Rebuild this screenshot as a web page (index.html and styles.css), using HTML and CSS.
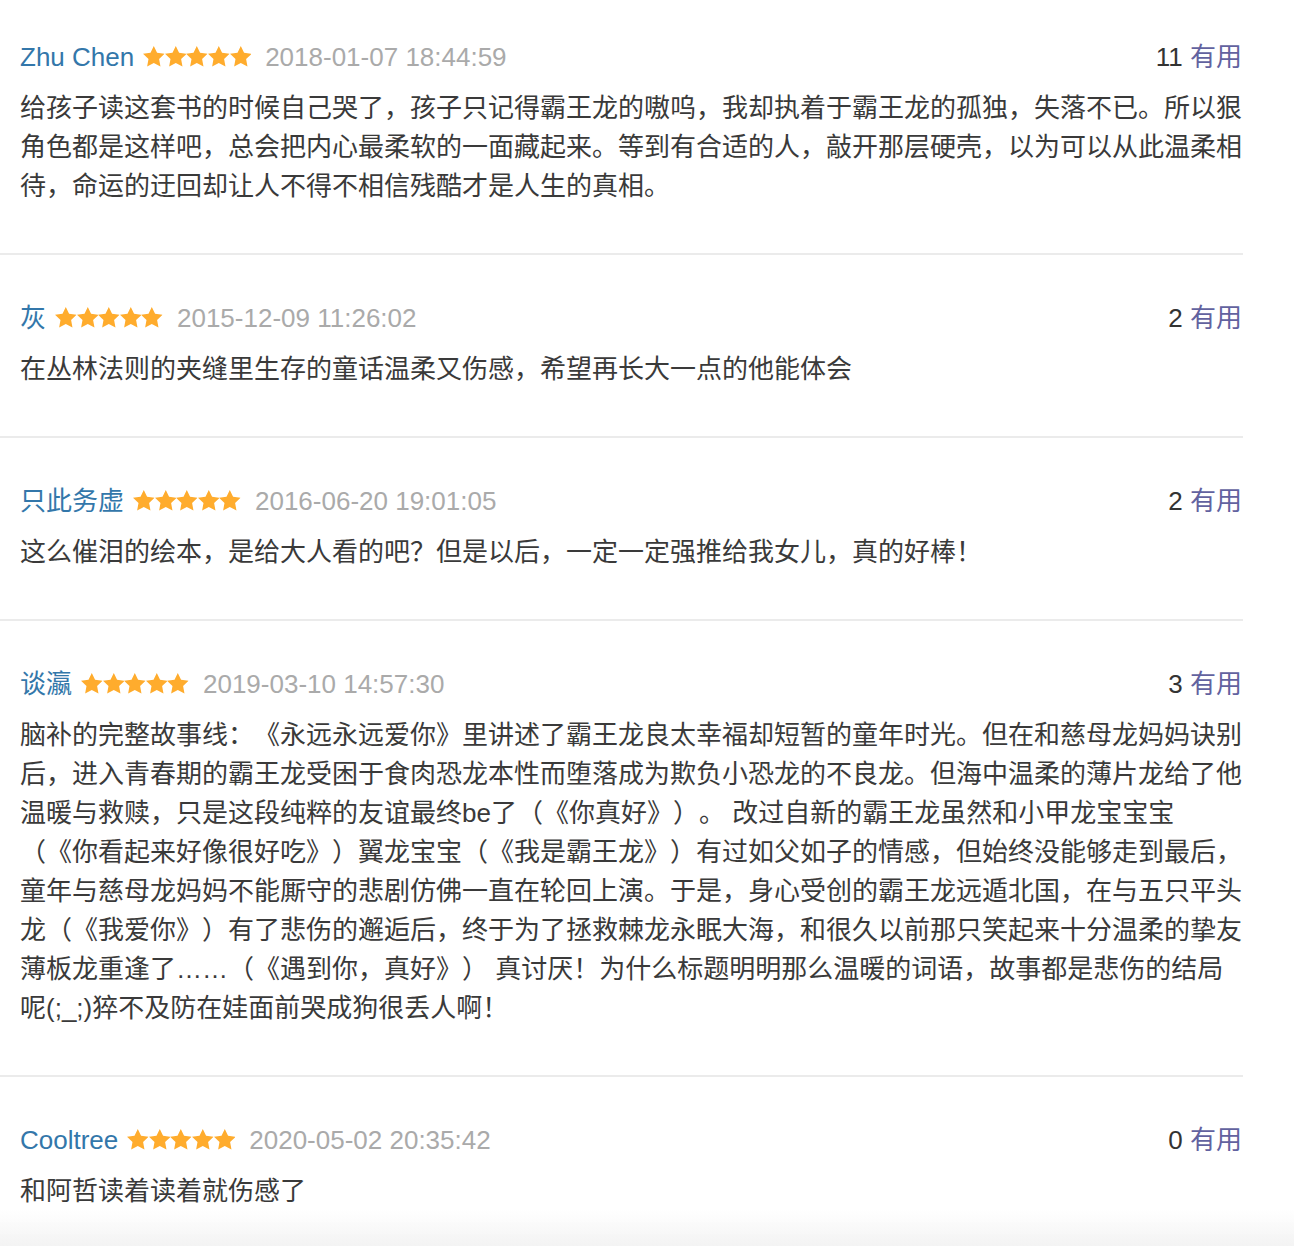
FILE: index.html
```html
<!DOCTYPE html>
<html lang="zh-CN">
<head>
<meta charset="utf-8">
<title>短评</title>
<link rel="stylesheet" href="styles.css">
</head>
<body>
<svg class="defs" width="0" height="0" aria-hidden="true">
  <defs>
    <symbol id="star" viewBox="0 0 24 24">
      <polygon points="12,0 15.64,7.58 23.98,8.71 17.9,14.52 19.41,22.79 12,18.8 4.59,22.79 6.1,14.52 0.02,8.71 8.36,7.58"/>
    </symbol>
  </defs>
</svg>
<div class="list">
  <div class="review">
    <div class="meta">
      <div class="who">
        <a class="name">Zhu Chen</a>
        <span class="stars"><svg><use href="#star"/></svg><svg><use href="#star"/></svg><svg><use href="#star"/></svg><svg><use href="#star"/></svg><svg><use href="#star"/></svg></span>
        <span class="date">2018-01-07 18:44:59</span>
      </div>
      <div class="vote"><span class="count">11</span> <a class="useful">有用</a></div>
    </div>
    <p class="text">给孩子读这套书的时候自己哭了，孩子只记得霸王龙的嗷呜，我却执着于霸王龙的孤独，失落不已。所以狠角色都是这样吧，总会把内心最柔软的一面藏起来。等到有合适的人，敲开那层硬壳，以为可以从此温柔相待，命运的迂回却让人不得不相信残酷才是人生的真相。</p>
  </div>
  <div class="review">
    <div class="meta">
      <div class="who">
        <a class="name">灰</a>
        <span class="stars"><svg><use href="#star"/></svg><svg><use href="#star"/></svg><svg><use href="#star"/></svg><svg><use href="#star"/></svg><svg><use href="#star"/></svg></span>
        <span class="date">2015-12-09 11:26:02</span>
      </div>
      <div class="vote"><span class="count">2</span> <a class="useful">有用</a></div>
    </div>
    <p class="text">在丛林法则的夹缝里生存的童话温柔又伤感，希望再长大一点的他能体会</p>
  </div>
  <div class="review">
    <div class="meta">
      <div class="who">
        <a class="name">只此务虚</a>
        <span class="stars"><svg><use href="#star"/></svg><svg><use href="#star"/></svg><svg><use href="#star"/></svg><svg><use href="#star"/></svg><svg><use href="#star"/></svg></span>
        <span class="date">2016-06-20 19:01:05</span>
      </div>
      <div class="vote"><span class="count">2</span> <a class="useful">有用</a></div>
    </div>
    <p class="text">这么催泪的绘本，是给大人看的吧？但是以后，一定一定强推给我女儿，真的好棒！</p>
  </div>
  <div class="review">
    <div class="meta">
      <div class="who">
        <a class="name">谈瀛</a>
        <span class="stars"><svg><use href="#star"/></svg><svg><use href="#star"/></svg><svg><use href="#star"/></svg><svg><use href="#star"/></svg><svg><use href="#star"/></svg></span>
        <span class="date">2019-03-10 14:57:30</span>
      </div>
      <div class="vote"><span class="count">3</span> <a class="useful">有用</a></div>
    </div>
    <p class="text">脑补的完整故事线：《永远永远爱你》里讲述了霸王龙良太幸福却短暂的童年时光。但在和慈母龙妈妈诀别后，进入青春期的霸王龙受困于食肉恐龙本性而堕落成为欺负小恐龙的不良龙。但海中温柔的薄片龙给了他温暖与救赎，只是这段纯粹的友谊最终be了（《你真好》）。 改过自新的霸王龙虽然和小甲龙宝宝宝（《你看起来好像很好吃》）翼龙宝宝（《我是霸王龙》）有过如父如子的情感，但始终没能够走到最后，童年与慈母龙妈妈不能厮守的悲剧仿佛一直在轮回上演。于是，身心受创的霸王龙远遁北国，在与五只平头龙（《我爱你》）有了悲伤的邂逅后，终于为了拯救棘龙永眠大海，和很久以前那只笑起来十分温柔的挚友薄板龙重逢了……（《遇到你，真好》） 真讨厌！为什么标题明明那么温暖的词语，故事都是悲伤的结局呢(;_;)猝不及防在娃面前哭成狗很丢人啊！</p>
  </div>
  <div class="review">
    <div class="meta">
      <div class="who">
        <a class="name">Cooltree</a>
        <span class="stars"><svg><use href="#star"/></svg><svg><use href="#star"/></svg><svg><use href="#star"/></svg><svg><use href="#star"/></svg><svg><use href="#star"/></svg></span>
        <span class="date">2020-05-02 20:35:42</span>
      </div>
      <div class="vote"><span class="count">0</span> <a class="useful">有用</a></div>
    </div>
    <p class="text">和阿哲读着读着就伤感了</p>
  </div>
</div>
<div class="fade"></div>
</body>
</html>
```

FILE: styles.css
```css
html, body {
  margin: 0;
  padding: 0;
  background: #fff;
}
body {
  font-family: "Liberation Sans", "Noto Sans CJK SC", sans-serif;
  font-size: 26px;
  color: #3a3a3a;
  text-spacing-trim: space-all;
}
.defs {
  position: absolute;
  width: 0;
  height: 0;
}
.list {
  width: 1243px;
}
.review {
  padding: 44px 0 47px 20px;
  border-bottom: 2px solid #ebebeb;
}
.review:first-child {
  padding-top: 38px;
}
.meta {
  display: flex;
  justify-content: space-between;
  align-items: center;
  height: 39px;
  line-height: 39px;
  padding-right: 1px;
}
.who {
  display: flex;
  align-items: center;
}
.name {
  color: #3377aa;
  margin-right: 9px;
}
.stars {
  display: flex;
  fill: #ffac2d;
  margin-right: 14px;
  margin-top: -2px;
}
.stars svg {
  width: 21.6px;
  height: 21.6px;
}
.date {
  color: #aaaaaa;
}
.count {
  color: #333;
}
.useful {
  color: #62629f;
}
.text {
  margin: 12px 0 0;
  width: 1222px;
  line-height: 39px;
}
.fade {
  position: fixed;
  left: 0;
  right: 0;
  bottom: 0;
  height: 36px;
  background: linear-gradient(to bottom, rgba(245, 245, 245, 0), #f3f3f3);
  pointer-events: none;
}
```
